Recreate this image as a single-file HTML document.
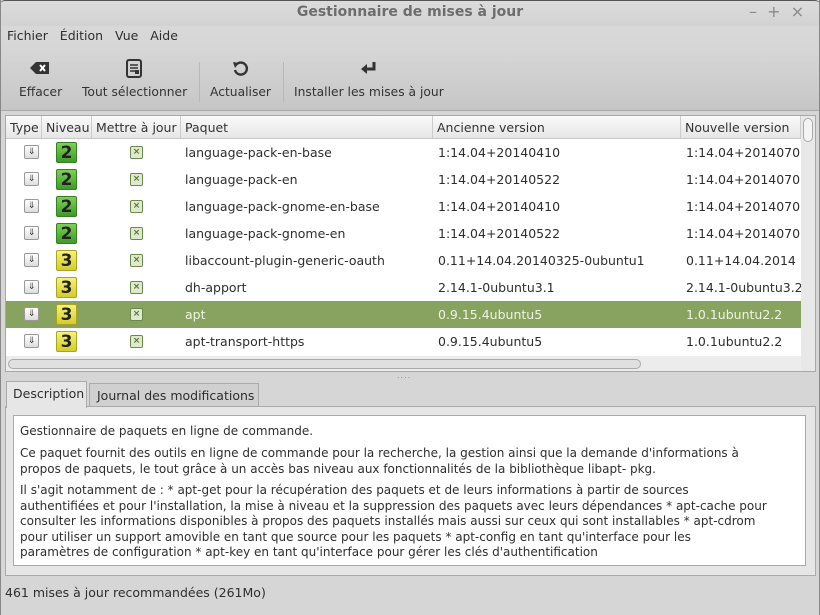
<!DOCTYPE html>
<html><head><meta charset="utf-8"><style>
*{margin:0;padding:0;box-sizing:border-box}
body{width:820px;height:615px;overflow:hidden;background:#d6d6d6;font-family:"DejaVu Sans","Liberation Sans",sans-serif;font-size:12px;color:#2e2e2e;position:relative}
.a{position:absolute;white-space:nowrap}
#title{left:0;top:0;width:820px;height:26px;background:linear-gradient(#dcdcdc,#d2d2d2);border-radius:5px 5px 0 0;border-top:1px solid #555}
#tb{left:0;top:26px;width:820px;height:84px;background:linear-gradient(#d8d8d8 0%,#d6d6d6 30%,#c6c6c6 100%)}
.tbt{font-size:12.3px;color:#333}
.sep{width:1px;height:40px;background:#b8b8b8;top:62px}
#tree{left:5px;top:115px;width:811px;height:257px;background:#fff;border:1px solid #a8a8a8;overflow:hidden}
.hd{top:0;height:23px;background:linear-gradient(#fafafa,#e6e6e6);border-right:1px solid #ccc;border-bottom:1px solid #c8c8c8;padding:4px 0 0 4px;font-size:12.5px;color:#333;overflow:hidden}
.row{left:0;width:795px;height:27px;overflow:hidden}
.cell{top:6px;font-size:12.5px}
.tp{width:15px;height:14px;border:1px solid #999;border-radius:2px;background:linear-gradient(#fff,#ddd);font-size:9px;line-height:12px;text-align:center;color:#333}
.lv{width:21px;height:21px;border-radius:2px;font-weight:bold;font-size:17px;line-height:21px;text-align:center;color:#222}
.l2{background:linear-gradient(#7fcf57,#3e9a2a);border:1px solid #3a7f25}
.l3{background:linear-gradient(#f4f27a,#d4cc2c);border:1px solid #a9a32a}
.cb{width:13px;height:13px;border:1px solid #6b8a4a;background:#dfe9cf;border-radius:2px;font-size:9px;line-height:11px;text-align:center;color:#567235;font-weight:bold}
</style></head><body>
<div class="a" id="title"></div>
<div class="a" style="left:0;top:4px;width:820px;text-align:center;font-weight:bold;font-size:14px;color:#6d6d6d">Gestionnaire de mises à jour</div>
<div class="a" style="left:749px;top:2px;font-size:16px;color:#8a8a8a">– &nbsp;+ &nbsp;×</div>
<div class="a" id="tb"></div>
<div class="a" style="left:7px;top:28px;font-size:12.5px;word-spacing:2px">Fichier &nbsp;Édition &nbsp;Vue &nbsp;Aide</div>
<svg class="a" style="left:30px;top:60px" width="20" height="16" viewBox="0 0 20 16"><path d="M6 2H19V14H6L0 8Z" fill="#333"/><path d="M10 5L15 11M15 5L10 11" stroke="#fff" stroke-width="2"/></svg>
<svg class="a" style="left:125px;top:59px" width="18" height="20" viewBox="0 0 18 20"><rect x="2" y="1" width="14" height="17" rx="2" fill="none" stroke="#333" stroke-width="2"/><path d="M5 6H13M5 9H13M5 12H10" stroke="#333" stroke-width="1.5"/><rect x="10" y="11" width="4" height="4" fill="#333"/></svg>
<svg class="a" style="left:231px;top:60px" width="18" height="18" viewBox="0 0 18 18"><path d="M4 10A6 6 0 1 0 6 4" fill="none" stroke="#333" stroke-width="2.4"/><path d="M2 2L8 3L4 8Z" fill="#333"/></svg>
<svg class="a" style="left:360px;top:60px" width="18" height="16" viewBox="0 0 18 16"><path d="M14 2V9H5" fill="none" stroke="#333" stroke-width="3"/><path d="M1 9L7 4V14Z" fill="#333"/></svg>
<div class="a tbt" style="left:19px;top:85px">Effacer</div>
<div class="a tbt" style="left:82px;top:85px">Tout sélectionner</div>
<div class="a sep" style="left:199px"></div>
<div class="a tbt" style="left:210px;top:85px">Actualiser</div>
<div class="a sep" style="left:283px"></div>
<div class="a tbt" style="left:294px;top:85px">Installer les mises à jour</div>
<div class="a" style="left:0;top:110px;width:820px;height:1px;background:#aaa"></div>

<div class="a" id="tree">
<div class="a hd" style="left:0;width:36px">Type</div>
<div class="a hd" style="left:36px;width:50px">Niveau</div>
<div class="a hd" style="left:86px;width:89px">Mettre à jour</div>
<div class="a hd" style="left:175px;width:252px">Paquet</div>
<div class="a hd" style="left:427px;width:248px">Ancienne version</div>
<div class="a hd" style="left:675px;width:120px">Nouvelle version</div>
<div class="a" style="left:795px;top:0;width:14px;height:255px;background:#e8e8e8"></div>
<div class="a" style="left:797px;top:2px;width:10px;height:24px;border:1px solid #aaa;border-radius:5px;background:#f4f4f4"></div>

<div class="a row" style="top:23px"><div class="a tp" style="left:18px;top:6px">⇓</div><div class="a lv l2" style="left:50px;top:3px">2</div><div class="a cb" style="left:124px;top:7px">×</div><div class="a cell" style="left:179px">language-pack-en-base</div><div class="a cell" style="left:432px">1:14.04+20140410</div><div class="a cell" style="left:680px">1:14.04+2014070</div></div>
<div class="a row" style="top:50px"><div class="a tp" style="left:18px;top:6px">⇓</div><div class="a lv l2" style="left:50px;top:3px">2</div><div class="a cb" style="left:124px;top:7px">×</div><div class="a cell" style="left:179px">language-pack-en</div><div class="a cell" style="left:432px">1:14.04+20140522</div><div class="a cell" style="left:680px">1:14.04+2014070</div></div>
<div class="a row" style="top:77px"><div class="a tp" style="left:18px;top:6px">⇓</div><div class="a lv l2" style="left:50px;top:3px">2</div><div class="a cb" style="left:124px;top:7px">×</div><div class="a cell" style="left:179px">language-pack-gnome-en-base</div><div class="a cell" style="left:432px">1:14.04+20140410</div><div class="a cell" style="left:680px">1:14.04+2014070</div></div>
<div class="a row" style="top:104px"><div class="a tp" style="left:18px;top:6px">⇓</div><div class="a lv l2" style="left:50px;top:3px">2</div><div class="a cb" style="left:124px;top:7px">×</div><div class="a cell" style="left:179px">language-pack-gnome-en</div><div class="a cell" style="left:432px">1:14.04+20140522</div><div class="a cell" style="left:680px">1:14.04+2014070</div></div>
<div class="a row" style="top:131px"><div class="a tp" style="left:18px;top:6px">⇓</div><div class="a lv l3" style="left:50px;top:3px">3</div><div class="a cb" style="left:124px;top:7px">×</div><div class="a cell" style="left:179px">libaccount-plugin-generic-oauth</div><div class="a cell" style="left:432px">0.11+14.04.20140325-0ubuntu1</div><div class="a cell" style="left:680px">0.11+14.04.2014</div></div>
<div class="a row" style="top:158px"><div class="a tp" style="left:18px;top:6px">⇓</div><div class="a lv l3" style="left:50px;top:3px">3</div><div class="a cb" style="left:124px;top:7px">×</div><div class="a cell" style="left:179px">dh-apport</div><div class="a cell" style="left:432px">2.14.1-0ubuntu3.1</div><div class="a cell" style="left:680px">2.14.1-0ubuntu3.2</div></div>
<div class="a row" style="top:185px;background:#88a35f;color:#eef3e4"><div class="a tp" style="left:18px;top:6px">⇓</div><div class="a lv l3" style="left:50px;top:3px">3</div><div class="a cb" style="left:124px;top:7px">×</div><div class="a cell" style="left:179px">apt</div><div class="a cell" style="left:432px">0.9.15.4ubuntu5</div><div class="a cell" style="left:680px">1.0.1ubuntu2.2</div></div>
<div class="a row" style="top:212px"><div class="a tp" style="left:18px;top:6px">⇓</div><div class="a lv l3" style="left:50px;top:3px">3</div><div class="a cb" style="left:124px;top:7px">×</div><div class="a cell" style="left:179px">apt-transport-https</div><div class="a cell" style="left:432px">0.9.15.4ubuntu5</div><div class="a cell" style="left:680px">1.0.1ubuntu2.2</div></div>
<div class="a" style="left:0;top:240px;width:795px;height:15px;background:#ececec"></div>
<div class="a" style="left:2px;top:243px;width:633px;height:10px;border:1px solid #aaa;border-radius:5px;background:#e0e0e0"></div>
</div>
<div class="a" style="left:397px;top:371px;font-size:8px;color:#888;letter-spacing:1px">....</div>

<div class="a" style="left:89px;top:383px;width:170px;height:24px;background:#d0d0d0;border:1px solid #aaa;border-bottom:none;padding:4px 0 0 7px;font-size:12.5px">Journal des modifications</div>
<div class="a" style="left:5px;top:406px;width:811px;height:170px;background:#e6e6e6;border:1px solid #aaa"></div>
<div class="a" style="left:6px;top:381px;width:81px;height:27px;background:#e6e6e6;border:1px solid #aaa;border-bottom:none;padding:4px 0 0 6px;font-size:12.5px">Description</div>
<div class="a" style="left:13px;top:415px;width:793px;height:151px;background:#fff;border:1px solid #aaa"></div>
<div class="a" style="left:20px;top:424px;line-height:15.5px;font-size:12px;color:#2e2e2e">Gestionnaire de paquets en ligne de commande.</div>
<div class="a" style="left:20px;top:446px;line-height:15.5px;font-size:12px">Ce paquet fournit des outils en ligne de commande pour la recherche, la gestion ainsi que la demande d'informations à<br>propos de paquets, le tout grâce à un accès bas niveau aux fonctionnalités de la bibliothèque libapt- pkg.</div>
<div class="a" style="left:20px;top:483px;line-height:15.6px;font-size:12px">Il s'agit notamment de : * apt-get pour la récupération des paquets et de leurs informations à partir de sources<br>authentifiées et pour l'installation, la mise à niveau et la suppression des paquets avec leurs dépendances * apt-cache pour<br>consulter les informations disponibles à propos des paquets installés mais aussi sur ceux qui sont installables * apt-cdrom<br>pour utiliser un support amovible en tant que source pour les paquets * apt-config en tant qu'interface pour les<br>paramètres de configuration * apt-key en tant qu'interface pour gérer les clés d'authentification</div>
<div class="a" style="left:5px;top:585px;font-size:12.5px">461 mises à jour recommandées (261Mo)</div>
<div class="a" style="left:0;top:0;width:1px;height:615px;background:#888"></div>
<div class="a" style="left:819px;top:0;width:1px;height:615px;background:#888"></div>
</body></html>
